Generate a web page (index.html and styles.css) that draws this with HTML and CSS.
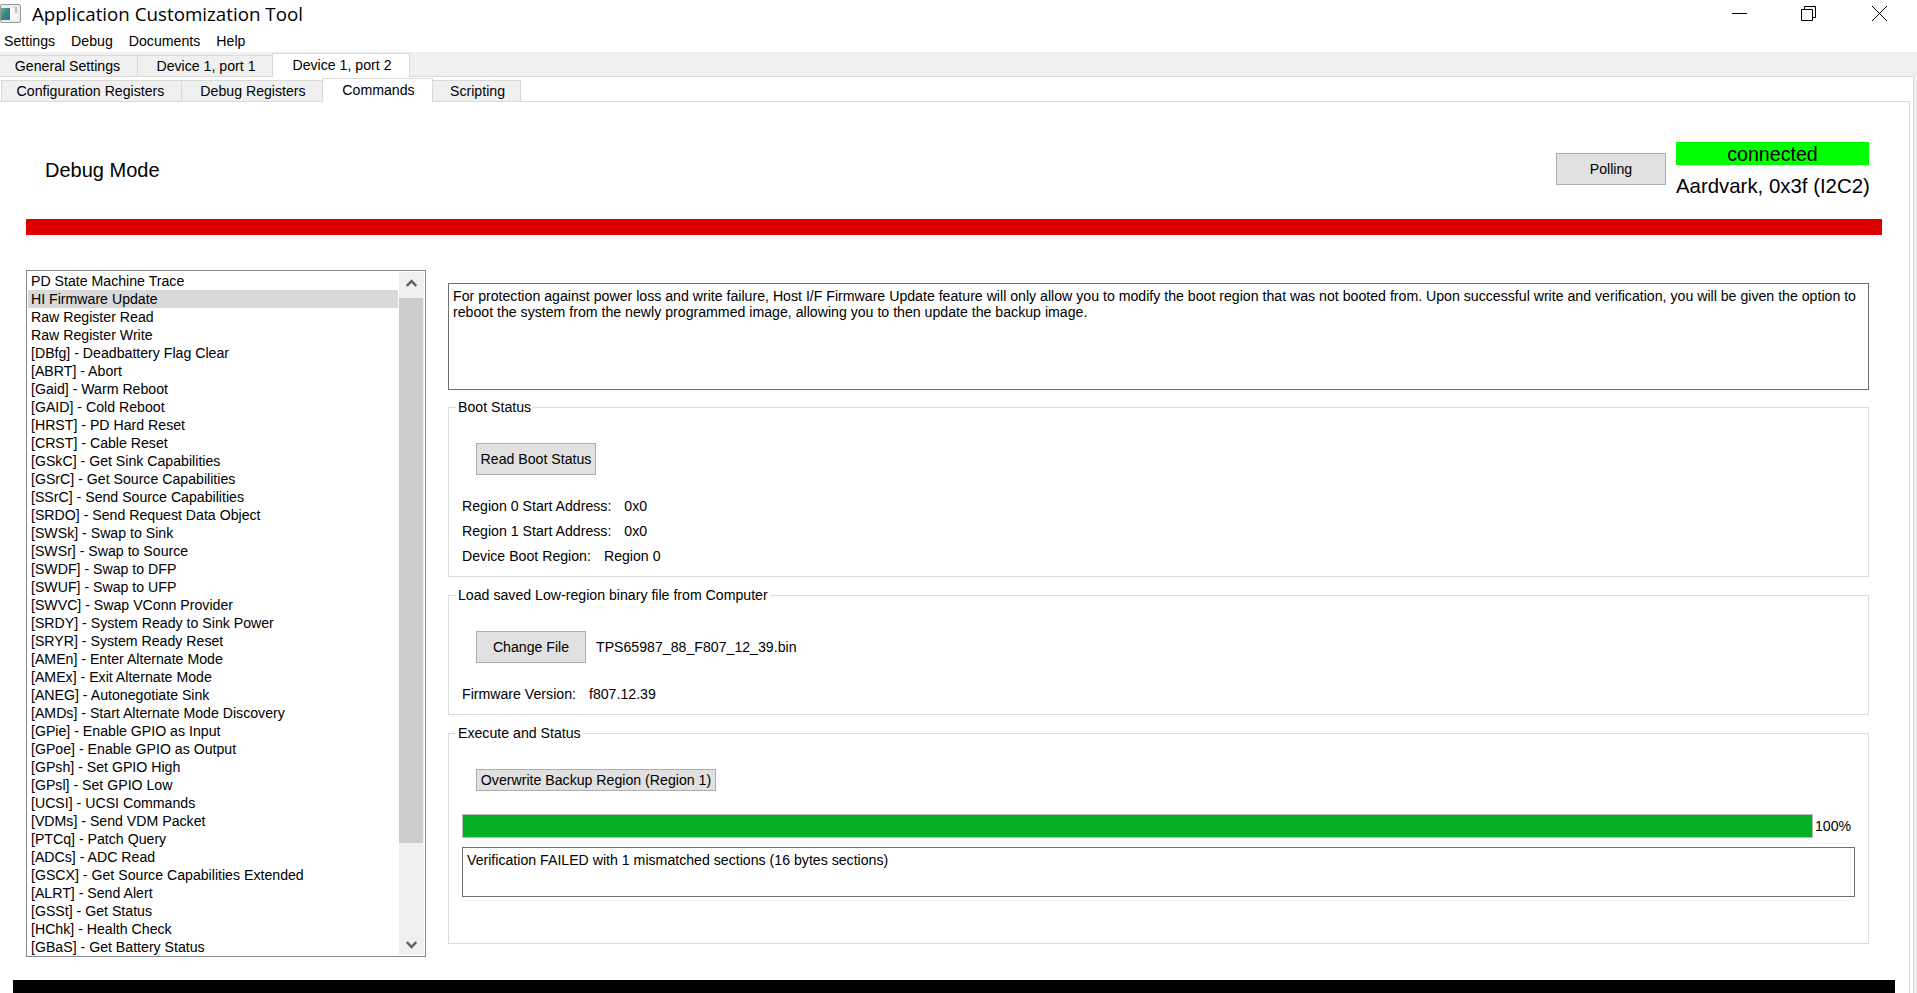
FILE: index.html
```html
<!DOCTYPE html>
<html lang="en">
<head>
<meta charset="utf-8">
<title>Application Customization Tool</title>
<link rel="stylesheet" href="styles.css">
</head>
<body>
<div class="window">
  <header class="titlebar">
    <svg class="app-icon" width="21" height="20" viewBox="0 0 21 20">
      <defs><linearGradient id="g" x1="0" y1="0" x2="1" y2="1"><stop offset="0" stop-color="#6fa8a0"/><stop offset="0.5" stop-color="#2f8a7a"/><stop offset="1" stop-color="#3a6fa8"/></linearGradient></defs>
      <rect x="0.5" y="0.5" width="20" height="18" rx="1.5" fill="#ececec" stroke="#9a9a9a"/>
      <rect x="1" y="4" width="9" height="12" fill="url(#g)"/>
      <rect x="10" y="4" width="7" height="12" fill="#f8f8f8"/>
      <rect x="15" y="3" width="2" height="6" fill="#a9c9b4"/>
    </svg>
    <span class="app-title">Application Customization Tool</span>
    <div class="controls">
      <svg class="ctl ctl-min" width="15" height="15" viewBox="0 0 15 15"><path d="M0 7.5H15" stroke="#000" fill="none"/></svg>
      <svg class="ctl ctl-max" width="15" height="15" viewBox="0 0 15 15"><path d="M.5 3.5H11.5V14.5H.5ZM3.5 3.5V.5H14.5V11.5H11.5" stroke="#000" fill="none"/></svg>
      <svg class="ctl ctl-close" width="15" height="15" viewBox="0 0 15 15"><path d="M0 0L15 15M15 0L0 15" stroke="#000" fill="none"/></svg>
    </div>
  </header>
  <nav class="menubar"><span>Settings</span><span>Debug</span><span>Documents</span><span>Help</span></nav>
  <div class="tabs tabs-outer">
    <div class="tab">General Settings</div>
    <div class="tab">Device 1, port 1</div>
    <div class="tab active">Device 1, port 2</div>
  </div>
  <div class="pane-outer">
    <div class="tabs tabs-inner">
      <div class="tab">Configuration Registers</div>
      <div class="tab">Debug Registers</div>
      <div class="tab active">Commands</div>
      <div class="tab">Scripting</div>
    </div>
    <div class="pane-inner">
      <div class="head">
        <div class="mode">Debug Mode</div>
        <button class="btn btn-polling">Polling</button>
        <div class="status">
          <div class="connected">connected</div>
          <div class="adapter">Aardvark, 0x3f (I2C2)</div>
        </div>
      </div>
      <div class="redbar"></div>
      <div class="main">
        <div class="listbox">
          <ul class="items">
            <li>PD State Machine Trace</li>
            <li class="selected">HI Firmware Update</li>
            <li>Raw Register Read</li>
            <li>Raw Register Write</li>
            <li>[DBfg] - Deadbattery Flag Clear</li>
            <li>[ABRT] - Abort</li>
            <li>[Gaid] - Warm Reboot</li>
            <li>[GAID] - Cold Reboot</li>
            <li>[HRST] - PD Hard Reset</li>
            <li>[CRST] - Cable Reset</li>
            <li>[GSkC] - Get Sink Capabilities</li>
            <li>[GSrC] - Get Source Capabilities</li>
            <li>[SSrC] - Send Source Capabilities</li>
            <li>[SRDO] - Send Request Data Object</li>
            <li>[SWSk] - Swap to Sink</li>
            <li>[SWSr] - Swap to Source</li>
            <li>[SWDF] - Swap to DFP</li>
            <li>[SWUF] - Swap to UFP</li>
            <li>[SWVC] - Swap VConn Provider</li>
            <li>[SRDY] - System Ready to Sink Power</li>
            <li>[SRYR] - System Ready Reset</li>
            <li>[AMEn] - Enter Alternate Mode</li>
            <li>[AMEx] - Exit Alternate Mode</li>
            <li>[ANEG] - Autonegotiate Sink</li>
            <li>[AMDs] - Start Alternate Mode Discovery</li>
            <li>[GPie] - Enable GPIO as Input</li>
            <li>[GPoe] - Enable GPIO as Output</li>
            <li>[GPsh] - Set GPIO High</li>
            <li>[GPsl] - Set GPIO Low</li>
            <li>[UCSI] - UCSI Commands</li>
            <li>[VDMs] - Send VDM Packet</li>
            <li>[PTCq] - Patch Query</li>
            <li>[ADCs] - ADC Read</li>
            <li>[GSCX] - Get Source Capabilities Extended</li>
            <li>[ALRT] - Send Alert</li>
            <li>[GSSt] - Get Status</li>
            <li>[HChk] - Health Check</li>
            <li>[GBaS] - Get Battery Status</li>
          </ul>
          <div class="scrollbar">
            <div class="sb-btn sb-up"><svg width="11" height="8" viewBox="0 0 11 8"><path d="M.8 7L5.5 2L10.2 7" stroke="#606060" stroke-width="2.5" fill="none"/></svg></div>
            <div class="sb-thumb"></div>
            <div class="sb-btn sb-down"><svg width="11" height="8" viewBox="0 0 11 8"><path d="M.8 1L5.5 6L10.2 1" stroke="#606060" stroke-width="2.5" fill="none"/></svg></div>
          </div>
        </div>
        <div class="details">
          <div class="textbox desc">For protection against power loss and write failure, Host I/F Firmware Update feature will only allow you to modify the boot region that was not booted from. Upon successful write and verification, you will be given the option to reboot the system from the newly programmed image, allowing you to then update the backup image.</div>
          <section class="group group-boot">
            <div class="legend">Boot Status</div>
            <button class="btn btn-read">Read Boot Status</button>
            <div class="rows">
              <div class="row"><span>Region 0 Start Address:</span><span>0x0</span></div>
              <div class="row"><span>Region 1 Start Address:</span><span>0x0</span></div>
              <div class="row"><span>Device Boot Region:</span><span>Region 0</span></div>
            </div>
          </section>
          <section class="group group-load">
            <div class="legend">Load saved Low-region binary file from Computer</div>
            <div class="file-line">
              <button class="btn btn-change">Change File</button>
              <span class="file-name">TPS65987_88_F807_12_39.bin</span>
            </div>
            <div class="rows">
              <div class="row"><span>Firmware Version:</span><span>f807.12.39</span></div>
            </div>
          </section>
          <section class="group group-exec">
            <div class="legend">Execute and Status</div>
            <button class="btn btn-overwrite">Overwrite Backup Region (Region 1)</button>
            <div class="progress-line">
              <div class="progress"><div class="progress-fill"></div></div>
              <span class="percent">100%</span>
            </div>
            <div class="textbox result">Verification FAILED with 1 mismatched sections (16 bytes sections)</div>
          </section>
        </div>
      </div>
      <div class="blackbar"></div>
    </div>
  </div>
</div>
</body>
</html>
```
FILE: styles.css
```css
* { box-sizing: border-box; }
html, body { margin: 0; height: 993px; overflow: hidden; }
body { background: #f0f0f0; color: #000; font: 14.15px/16px "Liberation Sans", Arial, sans-serif; }
.window { display: flex; flex-direction: column; height: 993px; }

.titlebar { display: flex; height: 33px; background: #fff; position: relative; }
.app-icon { margin-top: 4px; flex: none; }
.app-title { margin-left: 11px; font: 18.75px/28px "Open Sans", sans-serif; white-space: nowrap; }
.controls { display: flex; margin-left: auto; padding: 6px 30px 0 0; align-items: flex-start; }
.ctl-max { margin-left: 54px; }
.ctl-close { margin-left: 56px; }

.menubar { display: flex; gap: 16px; height: 19px; padding-left: 4px; background: #fff; line-height: 16px; }

.tabs { display: grid; height: 24px; line-height: 16px; text-align: center; }
.tabs-outer { grid-template-columns: 138px 135px 137px; }
.tabs-inner { grid-template-columns: 182px 141px 110px 88px; }
.tab { margin-top: 3px; padding: 2px 0 0 2px; background: #f0f0f0; border: 1px solid #d9d9d9; border-left-width: 0; border-bottom-width: 0; white-space: nowrap; }
.tab:first-child { padding: 2px 2px 0 0; }
.tabs-inner .tab:first-child { border-left-width: 1px; margin-left: 1px; }
.tab.active { position: relative; margin-top: 1px; margin-bottom: -1px; margin-left: -1px; padding-top: 3px; background: #fff; border-left-width: 1px; }

.pane-outer { flex: 1; margin-right: 3px; background: #fff; border-top: 1px solid #d9d9d9; border-right: 1px solid #d9d9d9; min-height: 0; }
.pane-inner { margin-right: 3px; height: 892px; border-top: 1px solid #d9d9d9; border-right: 1px solid #d9d9d9; overflow: hidden; }

.head { display: flex; align-items: flex-start; height: 117px; padding: 40px 40px 0 45px; }
.mode { margin-top: 17px; font-size: 20px; line-height: 23px; }
.btn { padding: 0; background: #e1e1e1; border: 1px solid #adadad; color: #000; font: inherit; }
.btn-polling { width: 110px; height: 32px; margin: 11px 0 0 auto; }
.status { width: 193px; margin-left: 10px; }
.connected { height: 23px; background: #00ff00; font-size: 19.6px; line-height: 24px; text-align: center; }
.adapter { margin-top: 9px; font-size: 20.4px; line-height: 24px; white-space: nowrap; }
.redbar { height: 16px; margin: 0 27px 0 26px; background: #dd0000; }

.main { display: flex; align-items: flex-start; padding: 35px 40px 0 26px; }
.listbox { display: flex; flex: none; width: 400px; height: 687px; margin-bottom: 23px; padding: 1px; border: 1px solid #828790; }
.items { flex: none; width: 371px; margin: 0; padding: 0 1px 0 0; list-style: none; }
.items li { height: 18px; padding-left: 3px; line-height: 18px; white-space: nowrap; }
.items li.selected { background: #d9d9d9; }
.scrollbar { display: flex; flex-direction: column; width: 25px; padding-right: 1px; background: #f0f0f0; }
.sb-btn { display: flex; align-items: center; justify-content: center; height: 26px; }
.sb-up { padding-bottom: 4px; }
.sb-down { margin-top: auto; padding-top: 6px; }
.sb-thumb { height: 545px; background: #cdcdcd; }

.details { flex: 1; margin: 13px 0 0 22px; min-width: 0; }
.textbox { padding: 4px; background: #fff; border: 1px solid #707070; }
.desc { height: 107px; }
.group { position: relative; margin-top: 18px; padding: 35px 13px 0; border: 1px solid #dcdcdc; }
.desc + .group { margin-top: 17px; }
.group-boot { height: 170px; }
.group-load { height: 120px; }
.group-exec { height: 211px; }
.legend { position: absolute; top: -9px; left: 7px; padding: 0 2px; background: #fff; white-space: nowrap; }
.btn-read, .btn-change, .btn-overwrite { display: block; margin-left: 14px; }
.btn-read { width: 120px; height: 32px; }
.btn-change { width: 110px; height: 32px; flex: none; }
.btn-overwrite { width: 240px; height: 22px; }
.file-line { display: flex; align-items: center; }
.file-name { margin-left: 10px; }
.rows { margin-top: 19px; }
.row { display: flex; gap: 13px; height: 25px; line-height: 25px; }
.progress-line { display: flex; align-items: center; margin-top: 23px; }
.progress { width: 1351px; height: 24px; background: #e6e6e6; border: 1px solid #bcbcbc; }
.progress-fill { height: 100%; background: #06b025; }
.percent { margin-left: 2px; }
.result { width: 1393px; height: 50px; margin-top: 9px; }
.blackbar { height: 13px; margin: 0 14px 0 13px; background: #000; }
```
